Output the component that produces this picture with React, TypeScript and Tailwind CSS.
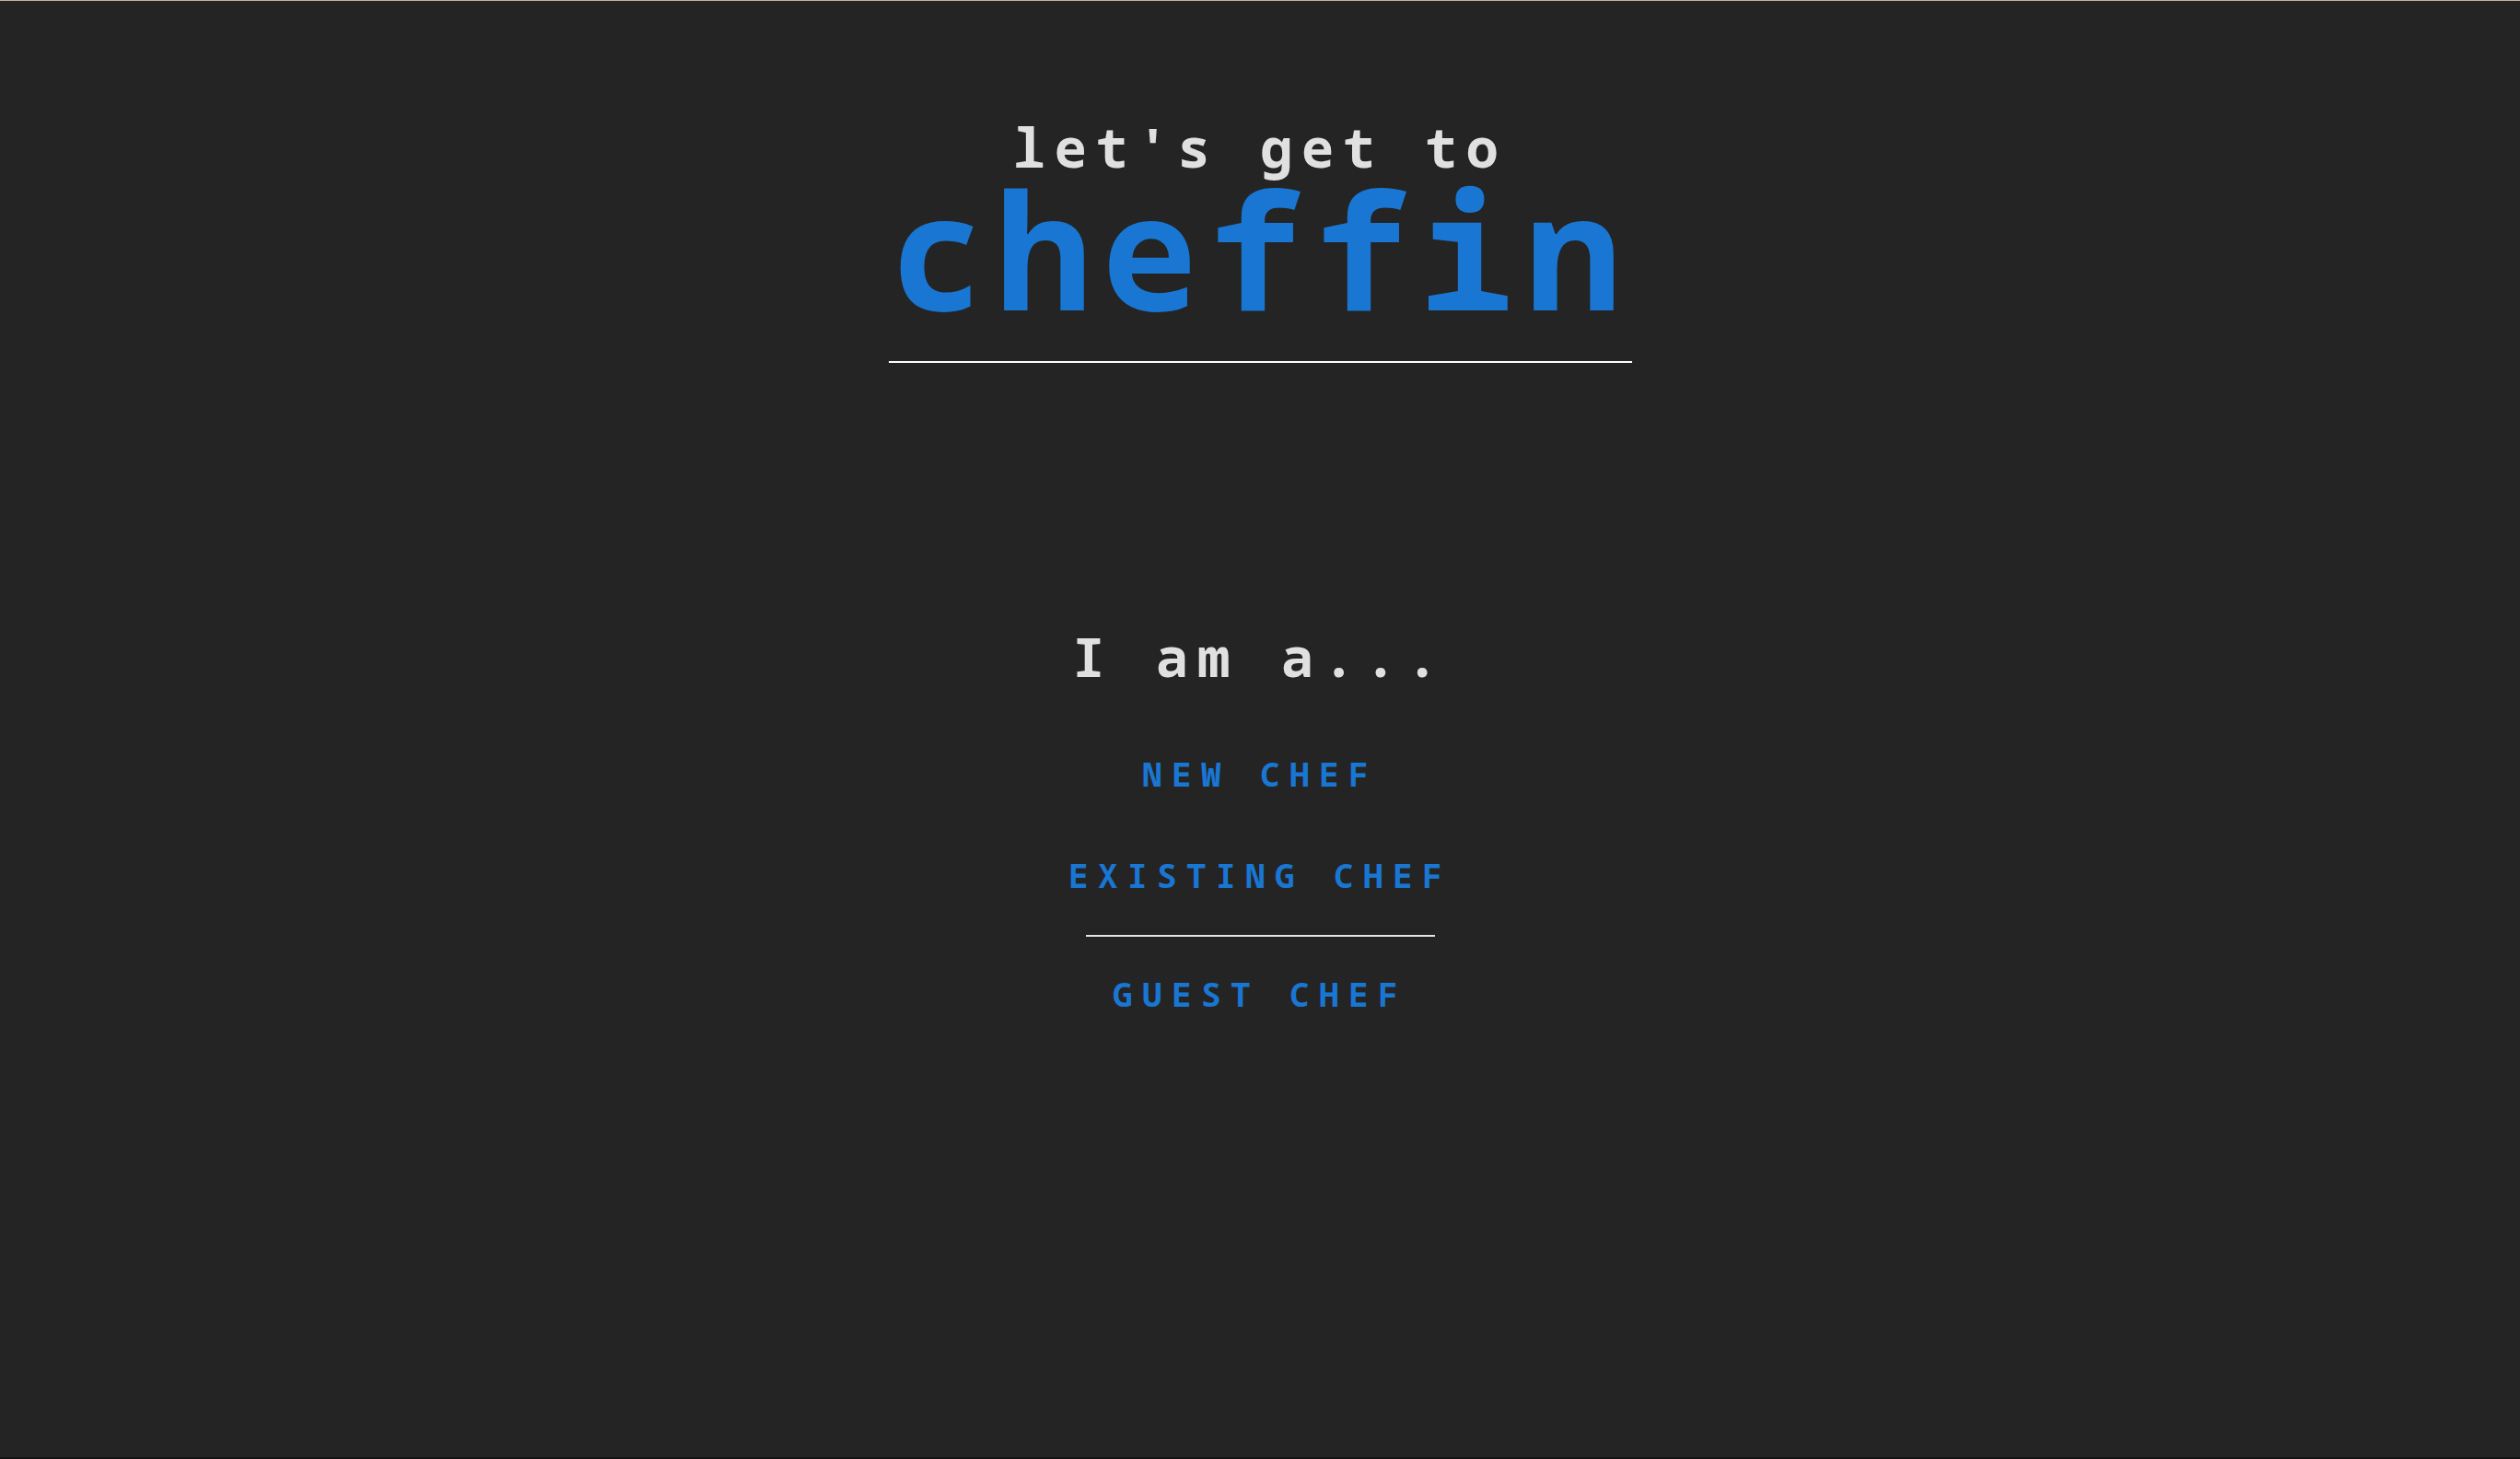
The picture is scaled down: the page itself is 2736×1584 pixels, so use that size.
import React from 'react';

const mono = "font-['Noto_Sans_Mono','Droid_Sans_Mono','DejaVu_Sans_Mono',monospace] font-bold";

export default function App() {
  const roles = [
    { label: 'NEW CHEF', gap: 'mt-[81px]' },
    { label: 'EXISTING CHEF', gap: 'mt-[74px]' },
  ];

  return (
    <div className="h-screen w-full overflow-hidden bg-[#242424] border-t border-[#c9aea6] border-b-2 border-b-[#141414] flex flex-col items-center pt-[133px]">
      {/* Title block */}
      <header className="w-[807px] flex flex-col items-center border-b-2 border-white pb-[38px]">
        <span className={`${mono} text-[59px] leading-[50px] tracking-[9.3px] text-[#e0e0e0]`}>
          let's get to
        </span>
        <h1 className={`${mono} text-[175px] leading-[170px] tracking-[10px] text-[#1976d2]`}>
          cheffin
        </h1>
      </header>

      {/* Role picker */}
      <main className="flex flex-col items-center mt-[289px]">
        <h2 className={`${mono} text-[59px] leading-[59px] tracking-[9.9px] text-[#e0e0e0]`}>
          I am a...
        </h2>
        {roles.map((r) => (
          <button
            key={r.label}
            className={`${mono} ${r.gap} text-[36px] leading-[36px] tracking-[10.4px] text-[#1976d2] bg-transparent`}
          >
            {r.label}
          </button>
        ))}
        <div className="w-[379px] h-[2px] bg-[#e6e6e6] mt-[46px]" />
        <button className={`${mono} mt-[45px] text-[36px] leading-[36px] tracking-[10.4px] text-[#1976d2] bg-transparent`}>
          GUEST CHEF
        </button>
      </main>
    </div>
  );
}
